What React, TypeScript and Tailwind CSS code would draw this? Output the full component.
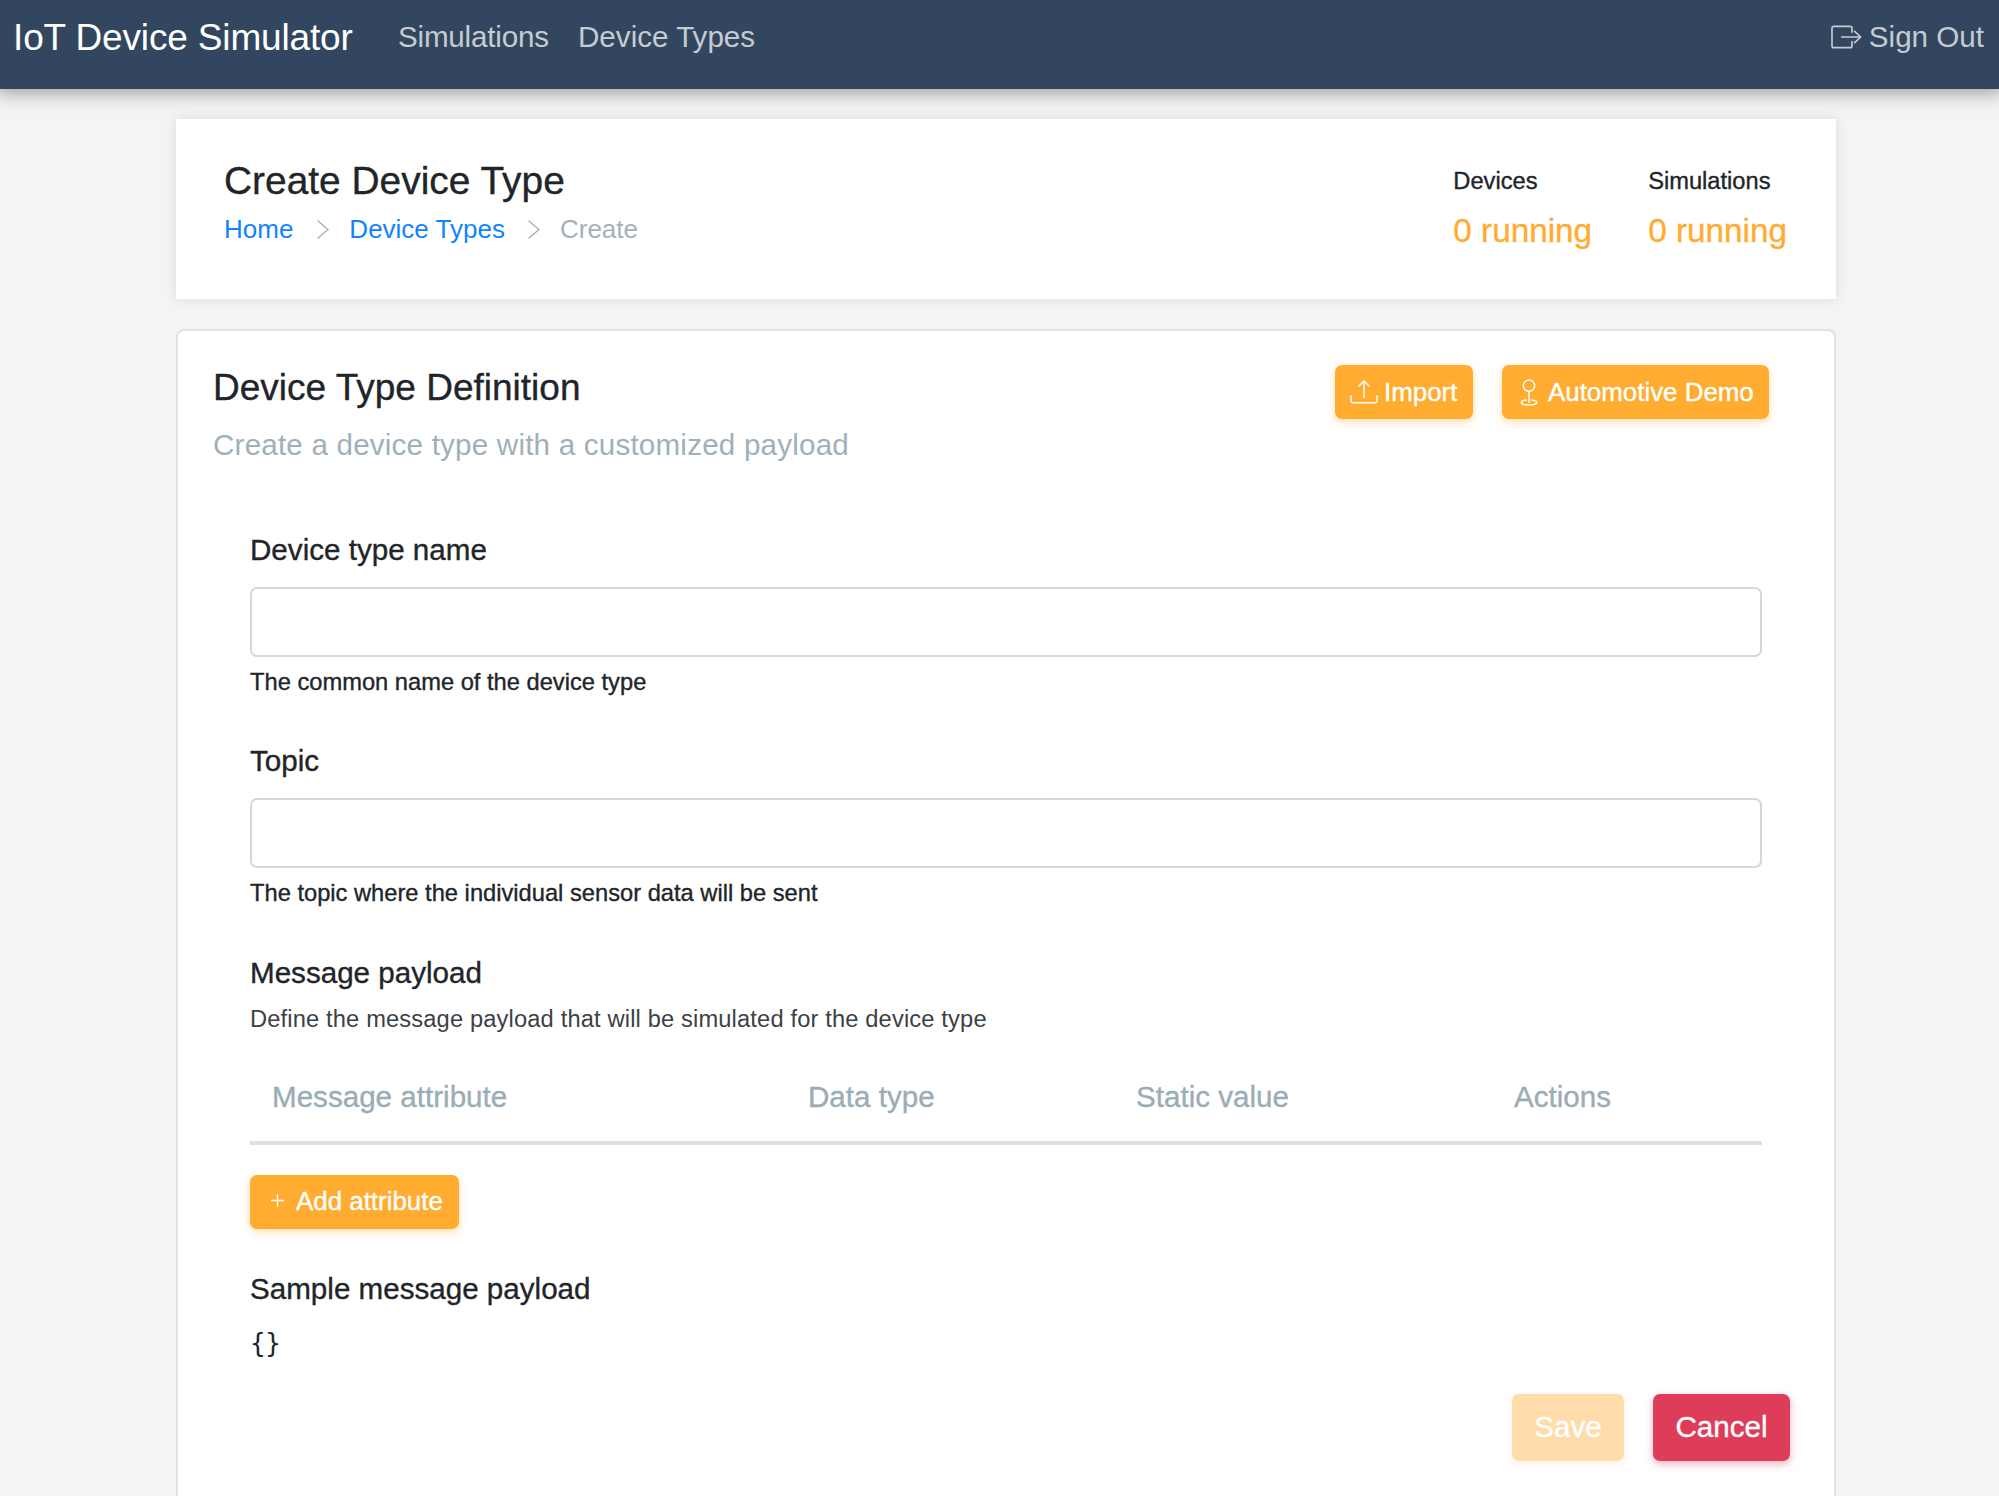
import React from "react";

function SignOutIcon() {
  return (
    <svg className="h-[24px] w-[31px] shrink-0" viewBox="0 0 93 72" fill="none" stroke="currentColor" strokeWidth="5" strokeLinecap="round">
      <path d="M63 22V10a6 6 0 0 0-6-6H9a6 6 0 0 0-6 6v52a6 6 0 0 0 6 6h48a6 6 0 0 0 6-6V50" />
      <path d="M32 36H89M71 19L89 36L71 53" strokeLinejoin="round" />
    </svg>
  );
}

function UploadIcon() {
  return (
    <svg className="h-[24px] w-[28px] shrink-0" viewBox="0 0 84 72" fill="none" stroke="currentColor" strokeWidth="4.5" strokeLinecap="round" strokeLinejoin="round">
      <path d="M3 47v15a6 6 0 0 0 6 6h66a6 6 0 0 0 6-6V47" />
      <path d="M42 53V4M27 18L42 3L57 18" />
    </svg>
  );
}

function JoystickIcon() {
  return (
    <svg className="h-[27px] w-[18px] shrink-0" viewBox="0 0 54 81" fill="none" stroke="currentColor" strokeWidth="4.5" strokeLinecap="round">
      <circle cx="27" cy="20" r="17" />
      <path d="M27 37V70" />
      <path d="M19 63C10 64 4 67 4 70.500C4 75 14 78 27 78S50 75 50 70.500C50 67 44 64 35 63" />
    </svg>
  );
}

function Chevron() {
  return (
    <svg className="h-[19px] w-[12px] shrink-0" viewBox="0 0 12 19" fill="none" stroke="currentColor" strokeWidth="1.400" strokeLinecap="round">
      <path d="M1 1L11 9.500L1 18" />
    </svg>
  );
}

function PlusIcon() {
  return (
    <svg className="mb-[3px] h-[13px] w-[13px] shrink-0" viewBox="0 0 13 13" stroke="currentColor" strokeWidth="1.300">
      <path d="M6.500 0V13M0 6.500H13" />
    </svg>
  );
}

function Stat({ label, value }: { label: string; value: string }) {
  return (
    <div className="[-webkit-text-stroke:0.350px]">
      <div className="text-[23.680px] leading-[36px]">{label}</div>
      <div className="mt-[7px] text-[33.300px] leading-[50px] text-[#ffac31]">{value}</div>
    </div>
  );
}

function Field({ label, help }: { label: string; help: string }) {
  return (
    <div className="h-[211.300px] [-webkit-text-stroke:0.350px]">
      <label className="block text-[29.600px] leading-[44px]">{label}</label>
      <input className="mt-[15px] block h-[70px] w-full rounded-[7px] border-2 border-[#d3d8dd] bg-white px-5 outline-none" />
      <div className="mt-[7px] text-[23.700px] leading-[36px]">{help}</div>
    </div>
  );
}

const orangeButton =
  "flex h-[54px] items-center rounded-[7px] bg-[#ffac31] text-[25.900px] text-white shadow-[0_3px_8px_rgba(255,172,49,0.4)] [-webkit-text-stroke:0.350px]";

export default function App() {
  return (
    <div className="h-[1496px] w-[1999px] overflow-hidden bg-[#f4f4f4] font-['Liberation_Sans',Arial,sans-serif] text-[#212529]">
      <nav className="relative flex h-[89px] items-center bg-[#32475f] pr-[15px] pb-[14px] pl-[13px] text-[29.600px] text-[#c6cbd1] shadow-[0_0_18px_4px_rgba(0,0,0,0.36)]">
        <a className="w-[385px] text-[37px] tracking-[-0.150px] text-white">IoT Device Simulator</a>
        <a className="w-[180px] tracking-[-0.200px]">Simulations</a>
        <a>Device Types</a>
        <a className="ml-auto flex items-center gap-[7px]">
          <SignOutIcon />
          Sign Out
        </a>
      </nav>

      <header className="mt-[30px] ml-[176px] flex h-[180px] w-[1660px] justify-between bg-white pr-[49px] pl-[48px] shadow-[0_0_12px_rgba(0,0,0,0.1)]">
        <div className="pt-[39px]">
          <h1 className="text-[38.900px] leading-[46px] [-webkit-text-stroke:0.350px]">Create Device Type</h1>
          <div className="mt-[6px] flex items-center text-[26px] leading-[39px] text-[#a3b2ba]">
            <a className="text-[#1283ff]">Home</a>
            <span className="mr-[20px] ml-[24px]"><Chevron /></span>
            <a className="text-[#1283ff]">Device Types</a>
            <span className="mr-[20px] ml-[23px]"><Chevron /></span>
            <span>Create</span>
          </div>
        </div>
        <div className="flex gap-[56px] pt-[44px]">
          <Stat label="Devices" value="0 running" />
          <Stat label="Simulations" value="0 running" />
        </div>
      </header>

      <main className="mt-[30px] ml-[176px] h-[1300px] w-[1660px] rounded-[8px] border-2 border-[#e1e2e3] bg-white pt-[34px] pl-[35px]">
        <div className="flex justify-between pr-[65px]">
          <div>
            <h2 className="mt-[1px] text-[37px] leading-[44px] [-webkit-text-stroke:0.350px]">Device Type Definition</h2>
            <p className="mt-[13px] text-[29.600px] leading-[44px] tracking-[0.200px] text-[#9fb0b9]">
              Create a device type with a customized payload
            </p>
          </div>
          <div className="flex gap-[29px]">
            <button className={`${orangeButton} w-[138px] gap-[6px] pl-[15px]`}>
              <UploadIcon />
              Import
            </button>
            <button className={`${orangeButton} w-[267px] gap-[10px] pl-[18px]`}>
              <JoystickIcon />
              Automotive Demo
            </button>
          </div>
        </div>

        <div className="mt-[61px] ml-[37px] w-[1512px]">
          <Field label="Device type name" help="The common name of the device type" />
          <Field label="Topic" help="The topic where the individual sensor data will be sent" />

          <h3 className="text-[29.600px] leading-[44px] [-webkit-text-stroke:0.350px]">Message payload</h3>
          <p className="mt-[6px] text-[23.680px] leading-[36px] tracking-[0.150px] text-[#3d4145]">
            Define the message payload that will be simulated for the device type
          </p>
          <div className="mt-[38px] grid h-[70px] grid-cols-[536px_328px_378px_1fr] border-b-4 border-[#dee2e6] pl-[22px] text-[29.600px] leading-[44px] text-[#9aadb7] [-webkit-text-stroke:0.350px]">
            <span>Message attribute</span>
            <span>Data type</span>
            <span>Static value</span>
            <span>Actions</span>
          </div>
          <button className={`${orangeButton} mt-[30px] w-[209px] gap-[12px] pl-[21px]`}>
            <PlusIcon />
            Add attribute
          </button>
          <h3 className="mt-[38px] text-[29.600px] leading-[44px] [-webkit-text-stroke:0.350px]">Sample message payload</h3>
          <pre className="mt-[13px] font-['DejaVu_Sans_Mono',monospace] text-[25.900px] leading-[39px] tracking-[-0.300px]">{"{}"}</pre>
        </div>

        <div className="mt-[31px] flex justify-end gap-[29px] pr-[44px] text-[29.600px] text-white [-webkit-text-stroke:0.350px]">
          <button className="h-[67px] w-[112px] rounded-[7px] bg-[#ffdca9] shadow-[0_3px_8px_rgba(255,172,49,0.15)]">Save</button>
          <button className="h-[67px] w-[137px] rounded-[7px] bg-[#dd3d59] shadow-[0_3px_8px_rgba(221,61,89,0.4)]">Cancel</button>
        </div>
      </main>
    </div>
  );
}
